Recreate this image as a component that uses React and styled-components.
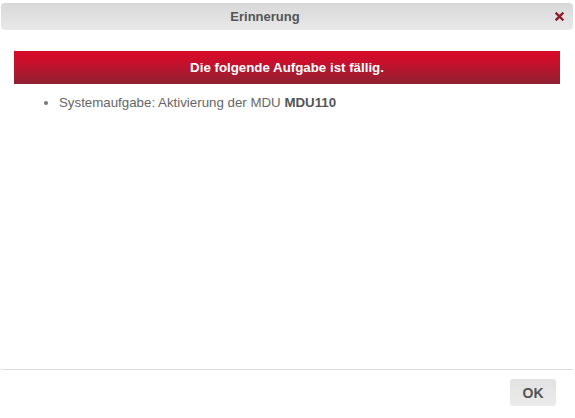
import React from "react";
import styled, { createGlobalStyle } from "styled-components";

const Global = createGlobalStyle`
  html, body { margin: 0; padding: 0; background: #fff; }
  body { font-family: "Liberation Sans", Arial, sans-serif; }
`;

const Dialog = styled.div`
  width: 575px;
  height: 418px;
  display: flex;
  flex-direction: column;
  box-sizing: border-box;
  padding-top: 3px;
`;

const TitleBar = styled.div`
  margin: 0 2px 0 1px;
  height: 27px;
  border-radius: 4px;
  background: linear-gradient(to bottom, #d8d8d8 0%, #e9e9e9 100%);
  display: flex;
  align-items: center;
  position: relative;
`;

const Title = styled.div`
  flex: 1;
  text-align: center;
  font-weight: bold;
  font-size: 13px;
  color: #555;
  padding-right: 44px;
`;

const Close = styled.button`
  position: absolute;
  right: 9px;
  top: 9px;
  width: 9px;
  height: 9px;
  padding: 0;
  border: 0;
  background: none;
  display: flex;
  cursor: pointer;
`;

const Body = styled.div`
  flex: 1;
  padding: 21px 14px 0 14px;
`;

const Banner = styled.div`
  height: 33px;
  background: linear-gradient(to bottom, #d70a28 0%, #c8102c 35%, #8e2232 100%);
  color: #fff;
  font-weight: bold;
  font-size: 13.3px;
  display: flex;
  align-items: center;
  justify-content: center;
  margin-right: 1px;
`;

const List = styled.ul`
  margin: 11px 0 0 0;
  padding-left: 45px;
  font-size: 13.3px;
  color: #666;
  list-style: disc;
  li::marker { color: #777; }
`;

const Item = styled.li`
  line-height: 15px;
  b { color: #555; }
`;

const Footer = styled.div`
  border-top: 1px solid #dcdcdc;
  margin: 0 2px 0 1px;
  height: 49px;
  display: flex;
  justify-content: flex-end;
  align-items: flex-start;
  padding: 9px 17px 0 0;
  box-sizing: border-box;
`;

const OkButton = styled.button`
  width: 46px;
  height: 27px;
  border: 0;
  border-radius: 3px;
  background: linear-gradient(to bottom, #e2e2e2, #ebebeb);
  color: #555;
  font-family: "Liberation Sans", Arial, sans-serif;
  font-weight: bold;
  font-size: 14px;
  padding: 0;
  cursor: pointer;
`;

export default function App() {
  return (
    <>
      <Global />
      <Dialog>
        <TitleBar>
          <Title>Erinnerung</Title>
          <Close aria-label="close">
            <svg width="9" height="9" viewBox="0 0 9 9">
              <path d="M1.5 1.5 L7.5 7.5 M7.5 1.5 L1.5 7.5" stroke="#8e1c2c" strokeWidth="2.4" strokeLinecap="square" />
            </svg>
          </Close>
        </TitleBar>
        <Body>
          <Banner>Die folgende Aufgabe ist fällig.</Banner>
          <List>
            <Item>
              Systemaufgabe: Aktivierung der MDU <b>MDU110</b>
            </Item>
          </List>
        </Body>
        <Footer>
          <OkButton>OK</OkButton>
        </Footer>
      </Dialog>
    </>
  );
}
